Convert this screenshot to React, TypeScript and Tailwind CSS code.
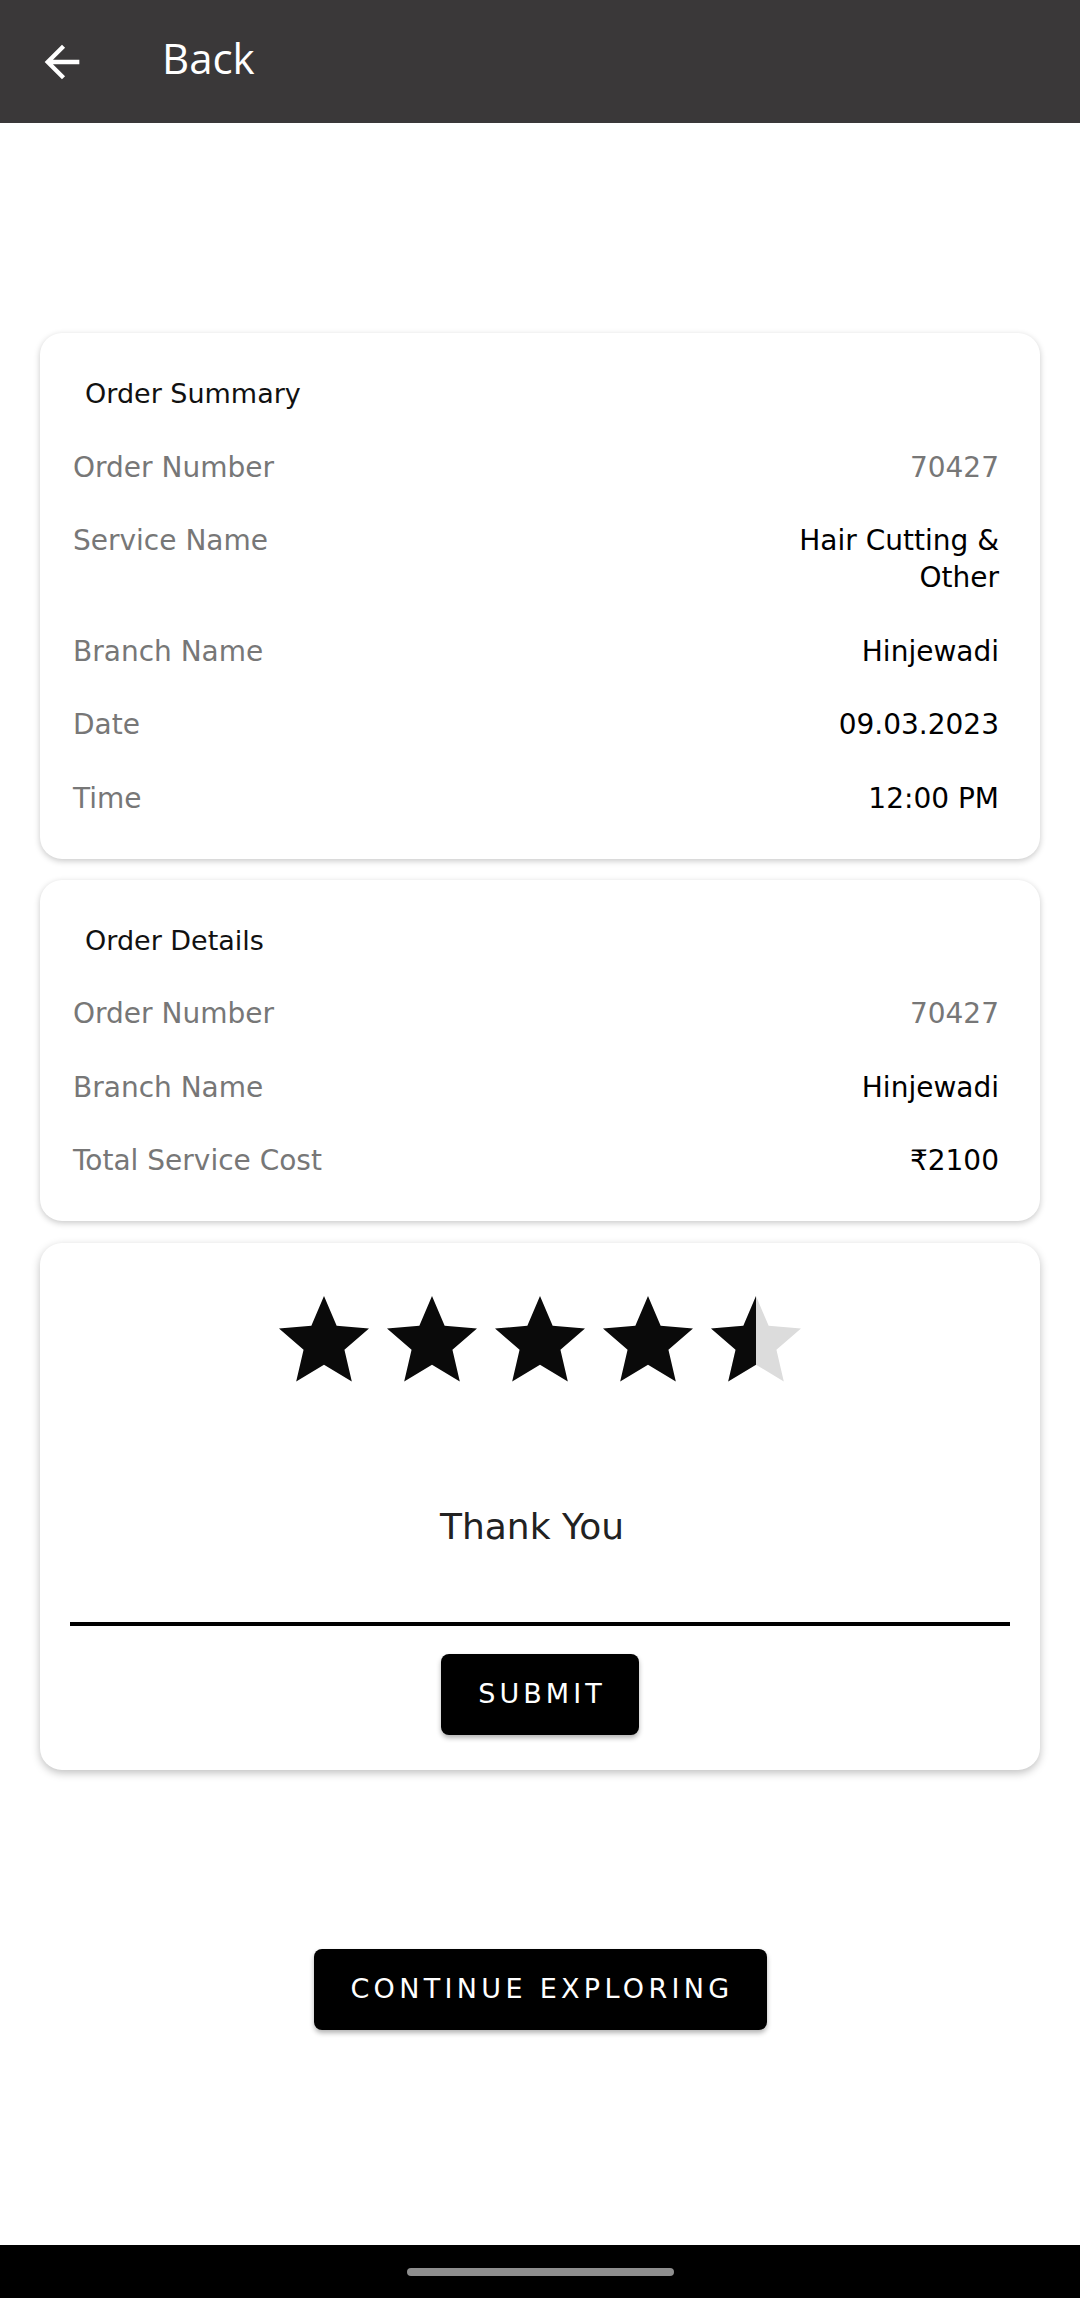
const FONT = "font-['DejaVu_Sans','Noto_Sans',sans-serif]";

interface Row {
  label: string;
  value: string[];
  muted?: boolean;
}

const SUMMARY: Row[] = [
  { label: 'Order Number', value: ['70427'], muted: true },
  { label: 'Service Name', value: ['Hair Cutting &', 'Other'] },
  { label: 'Branch Name', value: ['Hinjewadi'] },
  { label: 'Date', value: ['09.03.2023'] },
  { label: 'Time', value: ['12:00 PM'] },
];

const DETAILS: Row[] = [
  { label: 'Order Number', value: ['70427'], muted: true },
  { label: 'Branch Name', value: ['Hinjewadi'] },
  { label: 'Total Service Cost', value: ['₹2100'] },
];

const STAR = 'M12 17.27L18.18 21l-1.64-7.03L22 9.24l-7.19-.61L12 2 9.19 8.63 2 9.24l5.46 4.73L5.82 21z';

function Star({ fill }: { fill: 'full' | 'half' }) {
  return (
    <svg width="108" height="108" viewBox="0 0 24 24">
      <defs>
        <clipPath id="left-half">
          <rect x="0" y="0" width="12" height="24" />
        </clipPath>
      </defs>
      {fill === 'full' ? (
        <path d={STAR} fill="#0a0a0a" />
      ) : (
        <>
          <path d={STAR} fill="#dcdcdc" />
          <path d={STAR} fill="#0a0a0a" clipPath="url(#left-half)" />
        </>
      )}
    </svg>
  );
}

function InfoCard({ title, rows }: { title: string; rows: Row[] }) {
  return (
    <div className="mx-[40px] flex flex-col gap-[36.5px] rounded-[22px] bg-white py-[42px] pl-[33px] pr-[41px] shadow-[0_2px_6px_rgba(0,0,0,0.22)]">
      <p className="pl-[12px] text-[27px] leading-[37px] text-[#111]">{title}</p>
      {rows.map((row) => (
        <div key={row.label} className="flex items-start justify-between text-[28px] leading-[37px]">
          <span className="text-[#777]">{row.label}</span>
          <span className={row.muted ? 'text-right text-[#777]' : 'text-right text-black'}>
            {row.value.map((line) => (
              <span key={line} className="block">{line}</span>
            ))}
          </span>
        </div>
      ))}
    </div>
  );
}

export default function App() {
  return (
    <div className={`${FONT} flex h-[2298px] w-[1080px] flex-col bg-white`}>
      {/* top bar */}
      <header className="flex h-[123px] shrink-0 items-center bg-[#3a3839]">
        <svg width="52" height="52" viewBox="0 0 24 24" className="ml-[36px]">
          <path d="M20 11H7.83l5.59-5.59L12 4l-8 8 8 8 1.41-1.41L7.83 13H20v-2z" fill="#fff" />
        </svg>
        <span className="ml-[74px] mb-[7px] font-['Open_Sans',sans-serif] text-[42px] leading-none text-white">Back</span>
      </header>

      <main className="flex flex-1 flex-col pt-[210px]">
        <InfoCard title="Order Summary" rows={SUMMARY} />
        <div className="h-[21px]" />
        <InfoCard title="Order Details" rows={DETAILS} />

        {/* rating card */}
        <div className="mx-[40px] mt-[22px] flex flex-col items-center rounded-[22px] bg-white pb-[35px] pt-[44px] shadow-[0_3px_8px_rgba(0,0,0,0.25)]">
          <div className="flex">
            <Star fill="full" />
            <Star fill="full" />
            <Star fill="full" />
            <Star fill="full" />
            <Star fill="half" />
          </div>
          <div className="mt-[108px] w-[940px] border-b-[4px] border-black pb-[71px] pr-[16px] text-center text-[36px] leading-[48px] text-[#222]">
            Thank You
          </div>
          <button className="mt-[28px] flex h-[81px] w-[198px] items-center justify-center rounded-[8px] bg-black pl-[4px] text-[27px] tracking-[0.15em] text-white shadow-[0_3px_5px_rgba(0,0,0,0.3)]">
            SUBMIT
          </button>
        </div>

        <div className="mt-[179px] flex justify-center">
          <button className="flex h-[81px] w-[453px] items-center justify-center rounded-[8px] bg-black pl-[4px] text-[27px] tracking-[0.16em] text-white shadow-[0_3px_5px_rgba(0,0,0,0.3)]">
            CONTINUE EXPLORING
          </button>
        </div>
      </main>

      {/* system nav bar */}
      <div className="flex h-[53px] shrink-0 items-center justify-center bg-black">
        <div className="h-[8px] w-[267px] rounded-full bg-[#8e8e8e]" />
      </div>
    </div>
  );
}
